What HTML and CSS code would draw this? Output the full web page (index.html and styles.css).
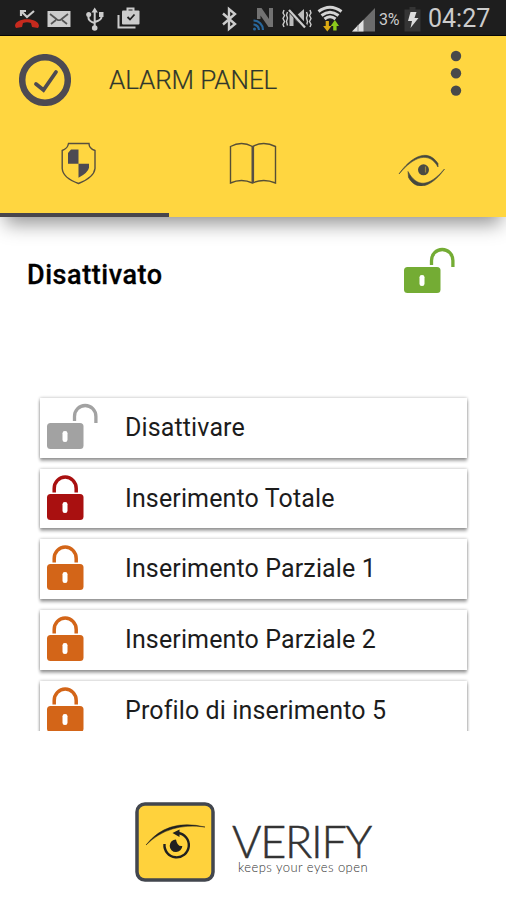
FILE: index.html
```html
<!DOCTYPE html>
<html lang="it">
<head>
<meta charset="utf-8">
<title>Alarm Panel</title>
<link rel="stylesheet" href="styles.css">
</head>
<body>
<svg class="defs" width="0" height="0" aria-hidden="true">
  <symbol id="locked" viewBox="0 0 52 48">
    <path d="M8.200 19.500v-4a11 11.500 0 0 1 22 0v4" fill="none" stroke="currentColor" stroke-width="3.500"/>
    <rect x="1" y="21" width="36.500" height="26" rx="3.500" fill="currentColor"/>
    <rect x="16.500" y="29" width="5" height="11" rx="2.300" fill="#fff"/>
  </symbol>
  <symbol id="unlocked" viewBox="0 0 52 48">
    <path d="M28.500 19v-4.500a10.700 11 0 0 1 21.400 0v6.500" fill="none" stroke="currentColor" stroke-width="3.300"/>
    <rect x="1" y="21" width="36.500" height="26" rx="3.500" fill="currentColor"/>
    <rect x="16.500" y="29" width="5" height="11" rx="2.300" fill="#fff"/>
  </symbol>
</svg>
<div class="status">
  <div class="notices">
    <svg width="26" height="35" viewBox="14 0 26 35"><path d="M21 11l6 6 7-6M21 16v-5h5" fill="none" stroke="#ccc" stroke-width="2.200"/><path d="M15 26c0-9 24-9 24 0l-1 2-6-1-1-4c-3-1-5-1-8 0l-1 4-6 1z" fill="#c62a1e"/></svg>
    <svg width="24" height="35" viewBox="47 0 24 35"><path d="M47.500 11h23v16h-23z" fill="#ccc"/><path d="M50 14l7 5.500q2 1.500 4 0l7-5.500M51 24l5-4M67 24l-5-4" fill="none" stroke="#555" stroke-width="1.700"/></svg>
    <svg width="18" height="35" viewBox="86 0 18 35"><path d="M94.700 11v17M88.500 14v4q0 3 6 5M101.500 14v3q0 3-6.500 5" fill="none" stroke="#ccc" stroke-width="2"/><path d="M91.500 12.500l3.200-5 3.200 5zM99 12h4.500v5H99z" fill="#ccc"/><circle cx="88.700" cy="14.500" r="2.500" fill="#ccc"/><circle cx="94.700" cy="28" r="2.800" fill="#ccc"/></svg>
    <svg width="24" height="35" viewBox="117 0 24 35"><path d="M118.500 15v12.500h17" fill="none" stroke="#ccc" stroke-width="2"/><path d="M127.500 11V8.500h6V11" fill="none" stroke="#ccc" stroke-width="2"/><rect x="122" y="10.500" width="17.500" height="14" rx="1" fill="#ccc"/><path d="M127.500 17l2.500 2.500 4.500-5" fill="none" stroke="#222" stroke-width="1.800"/></svg>
  </div>
  <div class="system">
    <svg class="bt" width="15" height="35" viewBox="222 0 15 35"><path d="M223 13.500l12 10.500-6 5V9l6 5-12 10.500" fill="none" stroke="#ccc" stroke-width="2.400"/></svg>
    <svg class="nfc" width="22" height="35" viewBox="252 0 22 35"><path d="M257 19V8h4.500l7.500 11V8h4v19h-4.500l-8-11.500V19z" fill="#727272"/><path d="M253.500 20.500a9.500 9.500 0 0 1 9.500 9.500M253.500 24.500a5.500 5.500 0 0 1 5.500 5.500" fill="none" stroke="#28679c" stroke-width="2.200"/><circle cx="254.500" cy="29" r="1.500" fill="#28679c"/></svg>
    <svg class="mute" width="30" height="35" viewBox="282 0 30 35"><path d="M284 10l-1 3 1.500 2.500-1.500 3 1.500 3-1.500 3 1 2.500M287.500 12l-1 3 1 3-1 3.500 1 4M310 10l1 3-1.500 2.500 1.500 3-1.500 3 1.500 3-1 2.500M306.500 12l1 3-1 3 1 3.500-1 4" fill="none" stroke="#ccc" stroke-width="1.400"/><path d="M289.500 13v13h4v-8.500zM295.500 16.500L304 9v19l-8.500-8z" fill="#bbb"/><path d="M289 8.500l17 19" stroke="#1c1c1c" stroke-width="5"/><path d="M289 10l16 17.500" stroke="#ccc" stroke-width="2.300"/></svg>
    <svg class="wifi" width="26" height="35" viewBox="317 0 26 35"><path d="M318.500 11.500q11.500-8.500 23 0M321.500 15.500q8.500-6.500 17 0M324.500 19q5.500-4.500 11 0" fill="none" stroke="#d4d4d4" stroke-width="3"/><path d="M325.700 21h3.200v5h2.600l-4.200 5.500-4.200-5.500h2.600z" fill="#dcaa12"/><path d="M333.200 30.500h3.400V26h2.400l-4.100-6-4.200 6h2.500z" fill="#8bc91c"/></svg>
    <svg class="signal" width="23" height="35" viewBox="352 0 23 35"><path d="M375 8v23.500h-23z" fill="#6c6c6c"/><path d="M363.500 19.800v11.700H352z" fill="#e0e0e0"/><path d="M358 25v7" stroke="#888"/></svg>
    <span class="percent">3%</span>
    <svg class="battery" width="17" height="35" viewBox="404 0 17 35"><path d="M404.500 9.500h5V7h6v2.500h5v22h-16z" fill="#353535"/><path d="M410.500 12h6l-2 6h4l-8 10 1.500-7H408z" fill="#ddd"/></svg>
    <span class="clock">04:27</span>
  </div>
</div>
<header class="header">
  <div class="titlebar">
    <svg width="52" height="52" viewBox="0 0 52 52"><circle cx="26" cy="26" r="22.800" fill="none" stroke="#4d4a52" stroke-width="6.500"/><path d="M17 30l7.500 6L37 18" fill="none" stroke="#4d4a52" stroke-width="3.800" stroke-linecap="round"/></svg>
    <h1 class="title">ALARM PANEL</h1>
    <svg class="more" width="12" height="46" viewBox="0 0 12 46"><g fill="#48494a"><circle cx="6" cy="6" r="5.200"/><circle cx="6" cy="23.300" r="5.200"/><circle cx="6" cy="40.600" r="5.200"/></g></svg>
  </div>
  <nav class="tabs">
    <div class="tab active"><svg class="shield" width="36" height="43" viewBox="0 0 36 43"><path d="M7.500 1.500H28q0 5 6 7v18q-1 9-16.500 15Q2 36 1.200 26.500V8.500q5.500-2 6.300-7z" fill="none" stroke="#574f3e" stroke-width="1.400"/><path d="M10 7.500h7.500V21.700H7V11zM17.500 21.700H28v4q-1 5-10.500 10z" fill="#4d4a52"/></svg></div>
    <div class="tab"><svg class="book" width="48" height="43" viewBox="0 0 48 43"><path d="M1.500 4.500q11-6 22 0 11-6 23 0v36.500q-12-5-23 0-11-5-22 0z" fill="none" stroke="#574f35" stroke-width="1.400"/><path d="M23.800 4v37" stroke="#574f45" stroke-width="2.600"/></svg></div>
    <div class="tab"><svg class="eye" width="48" height="32" viewBox="0 0 48 32"><path d="M1 20C12 4 29-7 40 9.500V13C31-3 16 2 1 20zM46.500 15C36 30 20 40 10.500 23.500L10 17.500C19 34 31 33 46.500 15z" fill="#45483f" stroke="#45483f" stroke-width=".6"/><circle cx="25.500" cy="15.800" r="5.500" fill="#4a4b43"/><path d="M27.500 12.500v6" stroke="#9a873d" stroke-width="1.200"/></svg></div>
  </nav>
</header>
<main>
  <section class="state"><h2 class="state-label">Disattivato</h2><svg class="lock green"><use href="#unlocked"/></svg></section>
  <div class="list">
    <div class="card"><svg class="lock gray"><use href="#unlocked"/></svg><span>Disattivare</span></div>
    <div class="card"><svg class="lock red"><use href="#locked"/></svg><span>Inserimento Totale</span></div>
    <div class="card"><svg class="lock orange"><use href="#locked"/></svg><span>Inserimento Parziale 1</span></div>
    <div class="card"><svg class="lock orange"><use href="#locked"/></svg><span>Inserimento Parziale 2</span></div>
    <div class="card"><svg class="lock orange"><use href="#locked"/></svg><span>Profilo di inserimento 5</span></div>
  </div>
</main>
<footer class="brand">
  <svg width="80" height="80" viewBox="0 0 80 80"><rect x="2" y="2" width="76" height="76" rx="8" fill="#ffd23c" stroke="#42464e" stroke-width="3.500"/><path d="M11 43Q32 16 70 25 34 20 11 43z" fill="#202020" stroke="#202020" stroke-width=".5"/><path d="M43 31a12.200 12.200 0 1 1-13.500 11" fill="none" stroke="#202020" stroke-width="2.400"/><path d="M37.500 31l7-3.500v7.500z" fill="#202020"/><path d="M41 37.500a6.300 6.300 0 1 0 6.300 6.500q-5 1-6.300-6.500z" fill="#202020"/></svg>
  <div class="wordmark"><div class="name">VERIFY</div><div class="tagline">keeps your eyes open</div></div>
</footer>
</body>
</html>
```
FILE: styles.css
```css
* { box-sizing: border-box; }
body { margin: 0; width: 506px; height: 900px; overflow: hidden; background: #fff; color: #1c1c1c; font-family: Roboto, sans-serif; }
svg { display: block; flex: none; }
.defs { position: absolute; }
.status { display: flex; justify-content: space-between; height: 36px; background: #1e1e1e; border-bottom: 1px solid #080808; color: #ccc; }
.notices, .system { display: flex; }
.notices { padding-left: 14px; }
.notices svg + svg { margin-left: 7px; }
.notices svg:nth-child(3) { margin-left: 15px; }
.notices svg:nth-child(4) { margin-left: 13px; }
.system { width: 284px; }
.nfc { margin-left: 15px; }
.mute { margin-left: 8px; }
.wifi { margin-left: 5px; }
.signal { margin-left: 9px; }
.percent { width: 25px; margin-left: 4px; font-size: 16px; line-height: 39px; letter-spacing: -.3px; }
.clock { margin-left: 7px; font-size: 25px; line-height: 37px; white-space: nowrap; }
.header { position: relative; height: 181px; background: #ffd640; box-shadow: 0 12px 18px -5px rgba(0, 0, 0, .42); }
.titlebar { display: flex; align-items: flex-start; height: 90px; padding: 18px 44px 0 19px; }
.title { margin: 9px 0 0 38px; font-size: 26px; font-weight: 300; line-height: 34px; letter-spacing: -.1px; color: #30372c; -webkit-text-stroke: .2px #30372c; }
.more { margin: -4px 0 0 auto; }
.tabs { display: grid; grid-template-columns: repeat(3, 1fr); height: 91px; }
.tab { display: flex; justify-content: center; padding-top: 16px; }
.tab.active { border-bottom: 4px solid #48464d; }
.shield { margin-left: -11px; }
.book { margin-left: 1px; }
.eye { margin-top: 12px; }
.state { display: flex; justify-content: space-between; height: 175px; padding: 29px 51px 0 27px; }
.state-label { margin: 12px 0 0; font-size: 27px; font-weight: 500; line-height: 34px; letter-spacing: .55px; color: #000; -webkit-text-stroke: .3px #000; }
.lock { width: 52px; height: 48px; }
.green { color: #74ac34; }
.gray { color: #a2a2a2; }
.red { color: #a91010; }
.orange { color: #d36518; }
.list { display: flex; flex-direction: column; gap: 11px; height: 339px; padding: 6px 39px 0 40px; overflow: hidden; }
.card { display: flex; flex: none; height: 59.7px; padding: 4px 0 0 6px; background: #fff; box-shadow: 0 3px 3px rgba(0, 0, 0, .33), 0 0 3px rgba(0, 0, 0, .3); }
.card span { margin: 2px 0 0 27px; font-size: 25px; font-weight: 400; line-height: 48px; letter-spacing: .13px; white-space: nowrap; }
.brand { display: flex; margin: 71px 0 0 135px; }
.wordmark { display: flex; flex-direction: column; margin: 20px 0 0 17px; color: #333; font-family: Lato, sans-serif; white-space: nowrap; }
.name { font-size: 45px; font-weight: 300; line-height: 38px; letter-spacing: -1.3px; -webkit-text-stroke: .5px #333; }
.tagline { margin: 0 0 0 6px; font-size: 13px; font-weight: 300; line-height: 14px; letter-spacing: .45px; }
```
